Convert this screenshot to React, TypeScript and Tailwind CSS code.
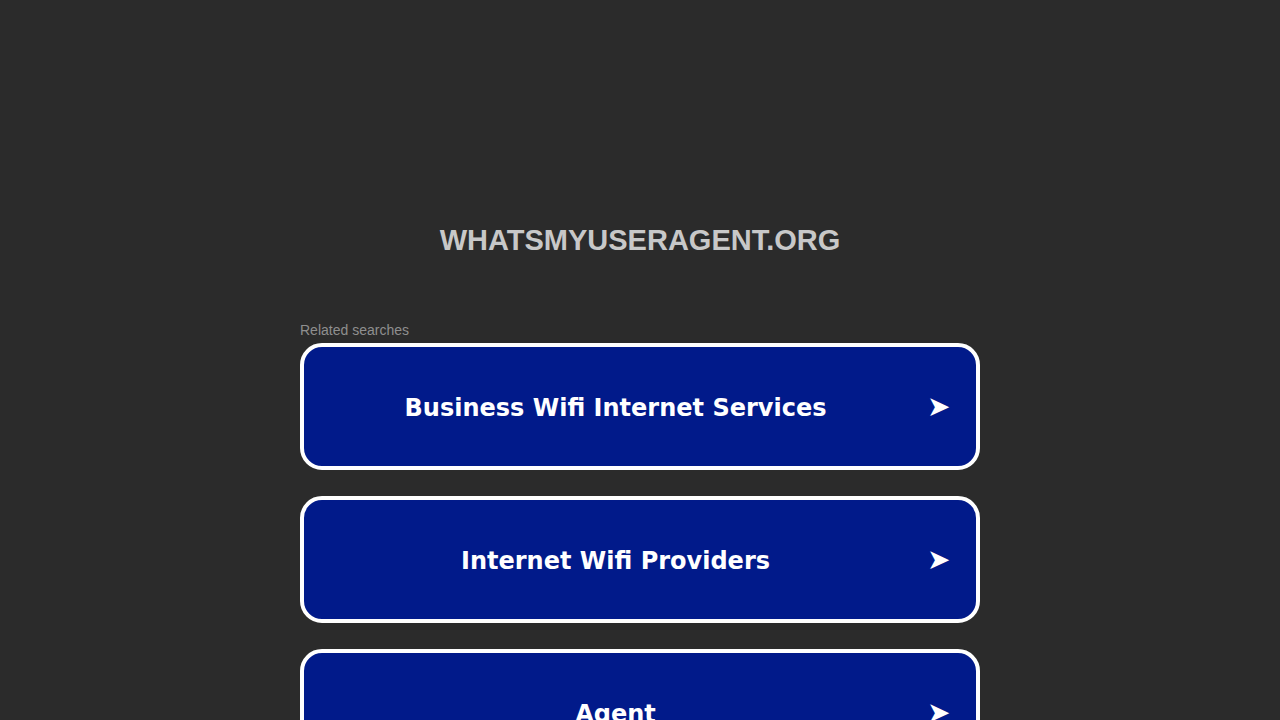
const searches = ["Business Wifi Internet Services", "Internet Wifi Providers", "Agent"];

const App = () => {
    return (
        <div className="min-h-screen bg-[#2b2b2b] flex flex-col items-center font-['Liberation_Sans',Arial,sans-serif]">
            <h1 className="mt-[222px] text-[29px] leading-[36px] font-bold text-[#c8c8c8]">WHATSMYUSERAGENT.ORG</h1>
            <div className="w-[680px] mt-[64px]">
                <div className="text-[14px] leading-[16px] text-[#8f8f8f]">Related searches</div>
                <div className="flex flex-col gap-[26px] mt-[5px]">
                    {searches.map((s, i) => (
                        <a
                            key={i}
                            href="#"
                            className="h-[127px] rounded-[22px] border-[4px] border-white bg-[#011a8a] flex items-center text-white"
                        >
                            <span className="flex-1 text-center text-[24px] leading-[30px] pt-[2px] font-bold font-['DejaVu_Sans',Verdana,sans-serif]">{s}</span>
                            <span className="w-[22px] mr-[27px] text-[28px] leading-none font-['DejaVu_Sans',sans-serif]">➤</span>
                        </a>
                    ))}
                </div>
            </div>
        </div>
    );
};

export default App;
